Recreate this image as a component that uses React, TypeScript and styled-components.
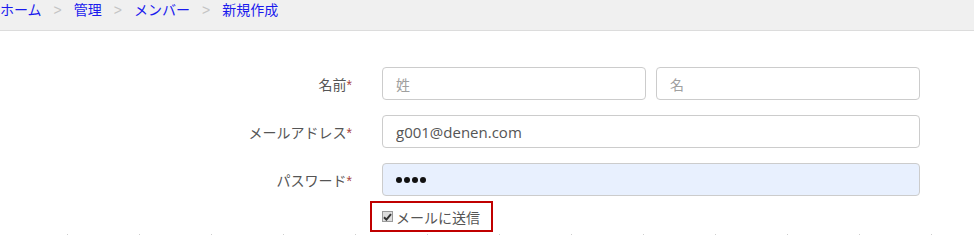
import styled, { createGlobalStyle } from "styled-components";

const GlobalStyle = createGlobalStyle`
  body {
    margin: 0;
    background: #ffffff;
    font-family: "Open Sans", "Noto Sans CJK JP", sans-serif;
  }
`;

const Breadcrumb = styled.nav`
  height: 31px;
  background-color: #f0f0f0;
  border-bottom: 1px solid #dcdcdc;
  display: flex;
  align-items: flex-start;
  gap: 12px;
  font-family: "Noto Sans CJK JP", sans-serif;
  font-size: 14px;
  line-height: 1;
  padding-top: 2px;
  box-sizing: border-box;
`;

const Crumb = styled.a`
  color: #1a1aee;
  text-decoration: none;
`;

const Separator = styled.span`
  color: #c4c4c4;
  font-family: "Liberation Sans", sans-serif;
  font-size: 14px;
  padding-top: 1px;
`;

const Form = styled.form`
  padding-top: 36px;
`;

const Row = styled.div<{ $gap?: number }>`
  display: grid;
  grid-template-columns: 352px 538px;
  column-gap: 30px;
  align-items: center;
  margin-bottom: ${({ $gap }) => ($gap ?? 15)}px;
`;

const Label = styled.label`
  text-align: right;
  color: #555555;
  font-family: "Noto Sans CJK JP", sans-serif;
  font-size: 14px;
`;

const Required = styled.span`
  color: #a94442;
  font-family: "Liberation Sans", sans-serif;
`;

const Pair = styled.div`
  display: grid;
  grid-template-columns: 1fr 1fr;
  column-gap: 10px;
`;

const Input = styled.input<{ $filled?: boolean }>`
  box-sizing: border-box;
  width: 100%;
  height: 33px;
  padding: 0 13px;
  border: 1px solid #cccccc;
  border-radius: 4px;
  background-color: ${({ $filled }) => ($filled ? "#e8f0fe" : "#ffffff")};
  color: #555555;
  font-family: "Open Sans", "Noto Sans CJK JP", sans-serif;
  font-size: 15px;
  outline: none;

  &::placeholder {
    color: #a0a0a0;
    font-family: "Noto Sans CJK JP", sans-serif;
    font-size: 14px;
  }
`;

const Dots = styled.div`
  box-sizing: border-box;
  height: 33px;
  padding: 0 13px;
  border: 1px solid #cccccc;
  border-radius: 4px;
  background-color: #e8f0fe;
  display: flex;
  align-items: center;
  gap: 2px;
`;

const Dot = styled.span`
  width: 6px;
  height: 6px;
  border-radius: 50%;
  background: #111111;
`;

const CheckLabel = styled.label`
  justify-self: start;
  margin-left: -12px;
  display: flex;
  align-items: center;
  gap: 3px;
  height: 31px;
  box-sizing: border-box;
  padding: 0 11px 0 10px;
  border: 2px solid #c00000;
  color: #555555;
  font-family: "Noto Sans CJK JP", sans-serif;
  font-size: 14px;
`;

const CheckBox = styled.span`
  width: 11px;
  height: 11px;
  box-sizing: border-box;
  border: 1px solid #9a9a9a;
  background: #dedede;
  display: flex;
  align-items: center;
  justify-content: center;
`;

const Ticks = styled.div`
  height: 1px;
  margin-top: 2px;
  background-image: linear-gradient(to right, #cfcfcf 1px, transparent 1px);
  background-size: 72px 1px;
  background-position: 67px 0;
  background-repeat: repeat-x;
`;

export default function App() {
  return (
    <>
      <GlobalStyle />
      <Breadcrumb>
        <Crumb href="#">ホーム</Crumb>
        <Separator>&gt;</Separator>
        <Crumb href="#">管理</Crumb>
        <Separator>&gt;</Separator>
        <Crumb href="#">メンバー</Crumb>
        <Separator>&gt;</Separator>
        <Crumb href="#">新規作成</Crumb>
      </Breadcrumb>
      <Form>
        <Row>
          <Label>
            名前<Required>*</Required>
          </Label>
          <Pair>
            <Input placeholder="姓" />
            <Input placeholder="名" />
          </Pair>
        </Row>
        <Row>
          <Label>
            メールアドレス<Required>*</Required>
          </Label>
          <Input defaultValue="g001@denen.com" />
        </Row>
        <Row $gap={5}>
          <Label>
            パスワード<Required>*</Required>
          </Label>
          <Dots>
            <Dot />
            <Dot />
            <Dot />
            <Dot />
          </Dots>
        </Row>
        <Row $gap={0}>
          <span />
          <CheckLabel>
            <CheckBox>
              <svg width="9" height="8" viewBox="0 0 9 8">
                <path
                  d="M1 4.2 L3.4 6.6 L8 1.2"
                  fill="none"
                  stroke="#333"
                  strokeWidth="2"
                />
              </svg>
            </CheckBox>
            メールに送信
          </CheckLabel>
        </Row>
        <Ticks />
      </Form>
    </>
  );
}
